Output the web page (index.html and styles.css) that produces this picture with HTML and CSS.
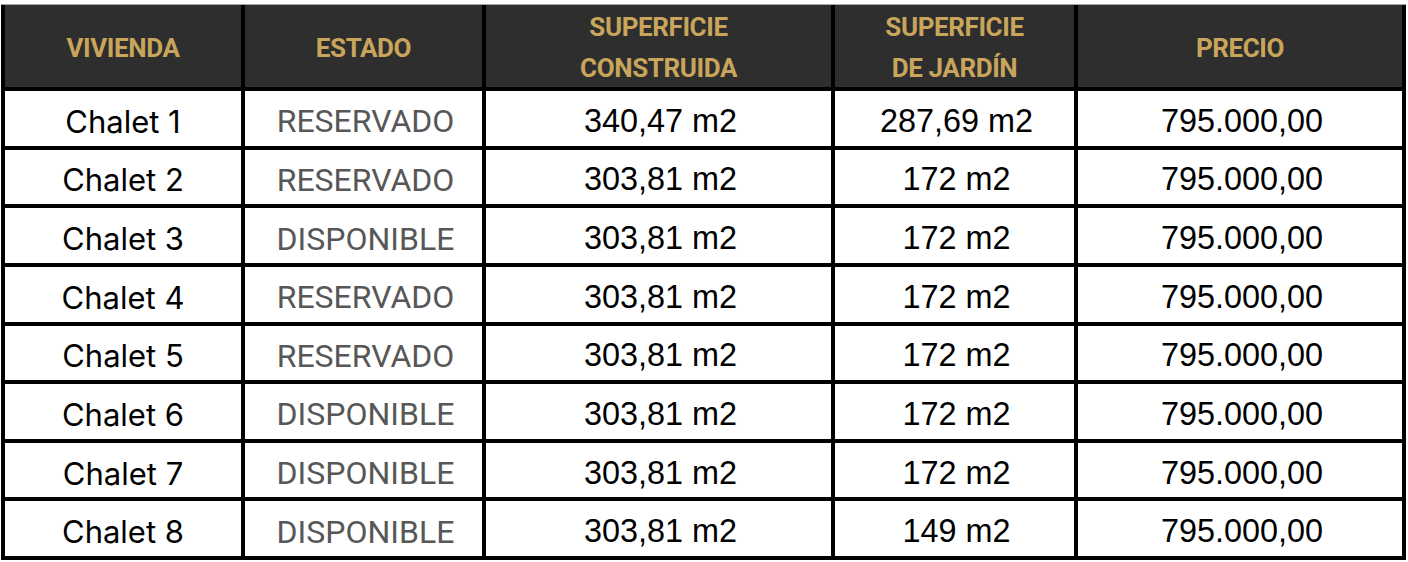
FILE: index.html
```html
<!DOCTYPE html>
<html lang="es">
<head>
<meta charset="utf-8">
<title>Viviendas</title>
<link rel="stylesheet" href="styles.css">
</head>
<body>
<div class="sheet">
  <div class="hd">VIVIENDA</div>
  <div class="hd">ESTADO</div>
  <div class="hd">SUPERFICIE<br>CONSTRUIDA</div>
  <div class="hd">SUPERFICIE<br>DE JARDÍN</div>
  <div class="hd">PRECIO</div>

  <div class="c name">Chalet 1</div><div class="c st">RESERVADO</div><div class="c num">340,47 m2</div><div class="c num">287,69 m2</div><div class="c num">795.000,00</div>
  <div class="c name">Chalet 2</div><div class="c st">RESERVADO</div><div class="c num">303,81 m2</div><div class="c num">172 m2</div><div class="c num">795.000,00</div>
  <div class="c name">Chalet 3</div><div class="c st">DISPONIBLE</div><div class="c num">303,81 m2</div><div class="c num">172 m2</div><div class="c num">795.000,00</div>
  <div class="c name">Chalet 4</div><div class="c st">RESERVADO</div><div class="c num">303,81 m2</div><div class="c num">172 m2</div><div class="c num">795.000,00</div>
  <div class="c name">Chalet 5</div><div class="c st">RESERVADO</div><div class="c num">303,81 m2</div><div class="c num">172 m2</div><div class="c num">795.000,00</div>
  <div class="c name">Chalet 6</div><div class="c st">DISPONIBLE</div><div class="c num">303,81 m2</div><div class="c num">172 m2</div><div class="c num">795.000,00</div>
  <div class="c name">Chalet 7</div><div class="c st">DISPONIBLE</div><div class="c num">303,81 m2</div><div class="c num">172 m2</div><div class="c num">795.000,00</div>
  <div class="c name">Chalet 8</div><div class="c st">DISPONIBLE</div><div class="c num">303,81 m2</div><div class="c num">149 m2</div><div class="c num">795.000,00</div>
</div>
</body>
</html>
```
FILE: styles.css
```css
html, body {
  margin: 0;
  padding: 0;
  background: #ffffff;
}

.sheet {
  display: grid;
  grid-template-columns: 236px 237px 345px 239px 324px;
  grid-template-rows: 82px repeat(8, 54.625px);
  gap: 4px;
  width: fit-content;
  margin: 4px 0 0 1px;
  padding: 0 4px 4px 4px;
  background: #000000;
  border-top: 1px solid #a6a6a6;
}

.hd {
  background: #2e2e2e;
  color: #c9a55c;
  font-family: "Roboto", "Liberation Sans", sans-serif;
  font-weight: 700;
  font-size: 26px;
  letter-spacing: -0.4px;
  line-height: 41px;
  display: flex;
  align-items: center;
  justify-content: center;
  text-align: center;
  padding-top: 4px;
  box-sizing: border-box;
}

.c {
  background: #ffffff;
  display: flex;
  align-items: center;
  justify-content: center;
  padding-top: 6px;
  box-sizing: border-box;
  white-space: nowrap;
}

.name {
  font-family: "Inter", "Noto Sans", sans-serif;
  font-size: 31px;
  color: #000000;
}

.st {
  font-family: "Roboto", "Liberation Sans", sans-serif;
  font-size: 32px;
  color: #575757;
  padding-left: 4px;
}

.num {
  font-family: "Liberation Sans", Arial, sans-serif;
  font-size: 32.4px;
  color: #000000;
  padding-left: 4px;
}
```
